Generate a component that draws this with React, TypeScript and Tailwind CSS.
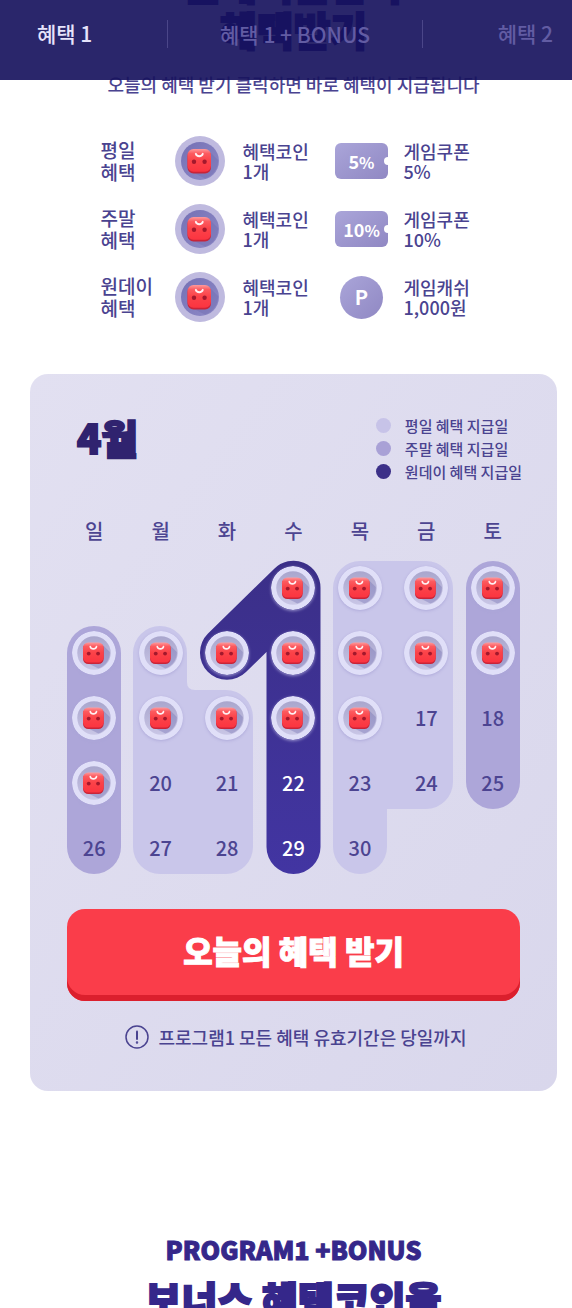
import React from 'react';

type Reward = { label: string[]; prize: string[]; badge: React.ReactNode };

const displayFont = 'font-black [stroke-linejoin:round] [-webkit-text-stroke:2px_currentColor]';
const displayFontThin = 'font-black [stroke-linejoin:round] [-webkit-text-stroke:1px_currentColor]';

function BagGlyph() {
  return (
    <g>
      <path d="M34 15 L43 24 A18.500 18.500 0 0 1 30 42.500 L17 36 Z" fill="#6a66ad" opacity="0.35" />
      <rect x="12.500" y="14" width="23.500" height="23.500" rx="6" fill="#c92438" />
      <rect x="12.500" y="13" width="23.500" height="22.800" rx="6" fill="url(#bagFace)" />
      <path d="M20.800 17.800 A3.600 3.200 0 0 0 27.800 17.800" fill="none" stroke="#fff0f2" strokeWidth="1.900" strokeLinecap="round" />
      <circle cx="19" cy="25.700" r="2.200" fill="#a3182c" />
      <circle cx="29.600" cy="25.700" r="2.200" fill="#a3182c" />
    </g>
  );
}

function Coin() {
  return (
    <svg viewBox="0 0 50 50" className="size-[50px]" aria-hidden="true">
      <circle cx="25" cy="25" r="25" fill="#bfbadf" />
      <circle cx="25" cy="25" r="19" fill="url(#coinDisc)" />
      <BagGlyph />
    </svg>
  );
}

function StampCoin({ day }: { day: number }) {
  return (
    <svg
      viewBox="0 0 50 50"
      className="mx-auto size-11 rounded-full shadow-[0_1px_3px_rgba(170,165,215,0.8)]"
      role="img"
      aria-label={`${day}`}
    >
      <circle cx="25" cy="25" r="25" fill="#e0dff8" />
      <circle cx="25" cy="25" r="19" fill="url(#stampDisc)" />
      <BagGlyph />
    </svg>
  );
}

function Coupon({ value }: { value: string }) {
  return (
    <div className="relative flex h-9 w-[53px] items-center justify-center overflow-hidden rounded-md bg-linear-to-br from-[#aaa5d9] to-[#9088c3] text-lg font-bold text-white">
      <span>
        {value}
        <span className="text-base">%</span>
      </span>
      <span className="absolute top-[14px] -right-1 size-2 rounded-full bg-white" />
    </div>
  );
}

const rewards: Reward[] = [
  { label: ['평일', '혜택'], prize: ['게임쿠폰', '5%'], badge: <Coupon value="5" /> },
  { label: ['주말', '혜택'], prize: ['게임쿠폰', '10%'], badge: <Coupon value="10" /> },
  {
    label: ['원데이', '혜택'],
    prize: ['게임캐쉬', '1,000원'],
    badge: (
      <div className="flex size-[43px] items-center justify-center rounded-full bg-linear-to-br from-[#aaa5d9] to-[#9088c3] text-xl font-bold text-white">
        P
      </div>
    ),
  },
];

const legend = [
  { text: '평일 혜택 지급일', dot: 'bg-[#c7c3e8]' },
  { text: '주말 혜택 지급일', dot: 'bg-[#a9a1d6]' },
  { text: '원데이 혜택 지급일', dot: 'bg-[#3c3088]' },
];

const weekdays = ['일', '월', '화', '수', '목', '금', '토'];
const weeks = [0, 1, 2, 3, 4].map((w) => weekdays.map((_, d) => w * 7 + d - 2));
const stampedThrough = 16;
const stampedExtra = [19];

function isStamped(day: number) {
  return day <= stampedThrough || stampedExtra.includes(day);
}

function Lines({ lines }: { lines: string[] }) {
  return (
    <>
      {lines.map((line) => (
        <span key={line} className="block whitespace-nowrap">
          {line}
        </span>
      ))}
    </>
  );
}

function CalendarShapes() {
  return (
    <svg
      viewBox="0 0 465 325"
      preserveAspectRatio="none"
      className="absolute inset-x-0 bottom-0 h-[325px] w-full"
      aria-hidden="true"
    >
      <rect x="6" y="71" width="54" height="248" rx="27" fill="#ada6d9" />
      <rect x="405" y="6" width="54" height="248" rx="27" fill="#ada6d9" />
      <path
        d="M72 98 A27 27 0 0 1 126 98 V127 Q126 135 134 135 H165 A27 27 0 0 1 192 162 V292 A27 27 0 0 1 165 319 H99 A27 27 0 0 1 72 292 Z"
        fill="#c9c6ea"
      />
      <path
        d="M272 33 A27 27 0 0 1 299 6 H365 A27 27 0 0 1 392 33 V227 A27 27 0 0 1 365 254 H326 V292 A27 27 0 0 1 272 292 Z"
        fill="#c9c6ea"
      />
      <path
        d="M213 14 A27 27 0 0 1 259.500 33 V292 A27 27 0 0 1 205.500 292 V97 L185 117 A27 27 0 0 1 147 78.500 Z"
        fill="url(#oneFill)"
      />
    </svg>
  );
}

function Calendar() {
  return (
    <div className="relative mt-6">
      <CalendarShapes />
      <table className="relative w-full table-fixed border-collapse text-center text-xl font-medium text-[#4c4491]">
        <thead>
          <tr className="h-12">
            {weekdays.map((name) => (
              <th key={name} scope="col" className="p-0 font-medium">
                {name}
              </th>
            ))}
          </tr>
        </thead>
        <tbody>
          {weeks.map((week) => (
            <tr key={week[0]} className="h-[65px]">
              {week.map((day, i) => (
                <td key={day} className={i === 3 ? 'p-0 text-white' : 'p-0'}>
                  {day >= 1 && day <= 30 && (isStamped(day) ? <StampCoin day={day} /> : day)}
                </td>
              ))}
            </tr>
          ))}
        </tbody>
      </table>
    </div>
  );
}

export default function App() {
  return (
    <div className='relative h-screen overflow-hidden bg-white font-["Noto_Sans_CJK_KR",sans-serif] font-medium text-[#4a4390]'>
      <svg className="absolute size-0" aria-hidden="true">
        <defs>
          <linearGradient id="bagFace" x1="0" y1="0" x2="0" y2="1">
            <stop offset="0" stopColor="#ff9a9c" />
            <stop offset="0.200" stopColor="#fc5a5f" />
            <stop offset="0.500" stopColor="#fb4349" />
            <stop offset="1" stopColor="#fb3440" />
          </linearGradient>
          <linearGradient id="coinDisc" x1="0" y1="0" x2="1" y2="1">
            <stop offset="0" stopColor="#7470b4" />
            <stop offset="1" stopColor="#8f8bc8" />
          </linearGradient>
          <linearGradient id="stampDisc" x1="0" y1="0" x2="0" y2="1">
            <stop offset="0" stopColor="#a9a6cd" />
            <stop offset="1" stopColor="#c9c6e6" />
          </linearGradient>
          <linearGradient id="oneFill" x1="0" y1="0" x2="0" y2="1">
            <stop offset="0" stopColor="#3b2f88" />
            <stop offset="1" stopColor="#4235a2" />
          </linearGradient>
        </defs>
      </svg>

      <header className="absolute inset-x-0 top-0 z-10 h-20 bg-[#18135e]/92">
        <nav className="grid h-full grid-cols-[1fr_auto_1fr] items-center pr-[19px] pb-3 pl-[37px] text-[21px] text-[#625ca3]">
          <a href="#program1" className="text-[#e6e3fb]">혜택 1</a>
          <a href="#bonus" className="border-x border-[#4b4689] px-[52px] leading-7">혜택 1 + BONUS</a>
          <a href="#program2" className="text-right">혜택 2</a>
        </nav>
      </header>

      <main className="pr-[15px] pl-[30px]">
        <section id="program1">
          <h1 className={`-mt-10 text-center text-[40px] leading-[46px] text-[#160c70] ${displayFont}`}>
            <span className="block">원데이를만나</span>
            <span className="block">혜택받기</span>
          </h1>
          <p className="mt-[18px] text-center text-lg leading-7 whitespace-nowrap">
            오늘의 혜택 받기 클릭하면 바로 혜택이 지급됩니다
          </p>

          <ul className="mx-auto mt-[38px] flex w-[386px] flex-col gap-[18px]">
            {rewards.map((reward) => (
              <li key={reward.label[0]} className="grid h-[50px] grid-cols-[74px_50px_110px_54px_1fr] items-center text-lg leading-5">
                <span className="text-[19px] leading-[22px]"><Lines lines={reward.label} /></span>
                <Coin />
                <span className="pl-[18px]"><Lines lines={['혜택코인', '1개']} /></span>
                <span className="flex justify-center">{reward.badge}</span>
                <span className="pl-[15px]"><Lines lines={reward.prize} /></span>
              </li>
            ))}
          </ul>
        </section>

        <section className="mt-[52px] rounded-[18px] bg-linear-to-br from-[#e2e0f1] to-[#d9d7ec] px-[31px] pt-10 pb-10">
          <div className="flex items-start justify-between pr-1 pl-4">
            <h2 className={`text-[40px] leading-[46px] text-[#30236f] ${displayFont}`}>4월</h2>
            <ul className="text-[15px] leading-[23px]">
              {legend.map((item) => (
                <li key={item.text} className="flex items-center gap-[14px]">
                  <span className={`size-[15px] rounded-full ${item.dot}`} />
                  {item.text}
                </li>
              ))}
            </ul>
          </div>

          <Calendar />

          <div className="px-[6px] pt-[29px]">
            <button
              type="button"
              className={`h-[92px] w-full rounded-[18px] bg-[#fa3d4a] pb-[10px] text-[32px] text-white shadow-[inset_0_-6px_0_#db1f2d] ${displayFontThin}`}
            >
              오늘의 혜택 받기
            </button>
          </div>

          <p className="mt-[22px] flex items-center justify-center gap-[10px] pl-1 text-lg leading-7 whitespace-nowrap">
            <svg viewBox="0 0 24 24" className="size-6 shrink-0" fill="none" stroke="currentColor" aria-hidden="true">
              <circle cx="12" cy="12" r="11" strokeWidth="1.500" />
              <path d="M12 6.500V14" strokeWidth="2" strokeLinecap="round" />
              <circle cx="12" cy="17.500" r="0.500" strokeWidth="1.500" />
            </svg>
            프로그램1 모든 혜택 유효기간은 당일까지
          </p>
        </section>

        <section id="bonus" className="pt-[142px] text-center text-[#35278a]">
          <p className={`text-[25px] leading-8 ${displayFontThin}`}>PROGRAM1 +BONUS</p>
          <h2 className={`mt-[10px] text-[39px] leading-[46px] whitespace-nowrap ${displayFont}`}>보너스 혜택코인을</h2>
        </section>
      </main>
    </div>
  );
}
